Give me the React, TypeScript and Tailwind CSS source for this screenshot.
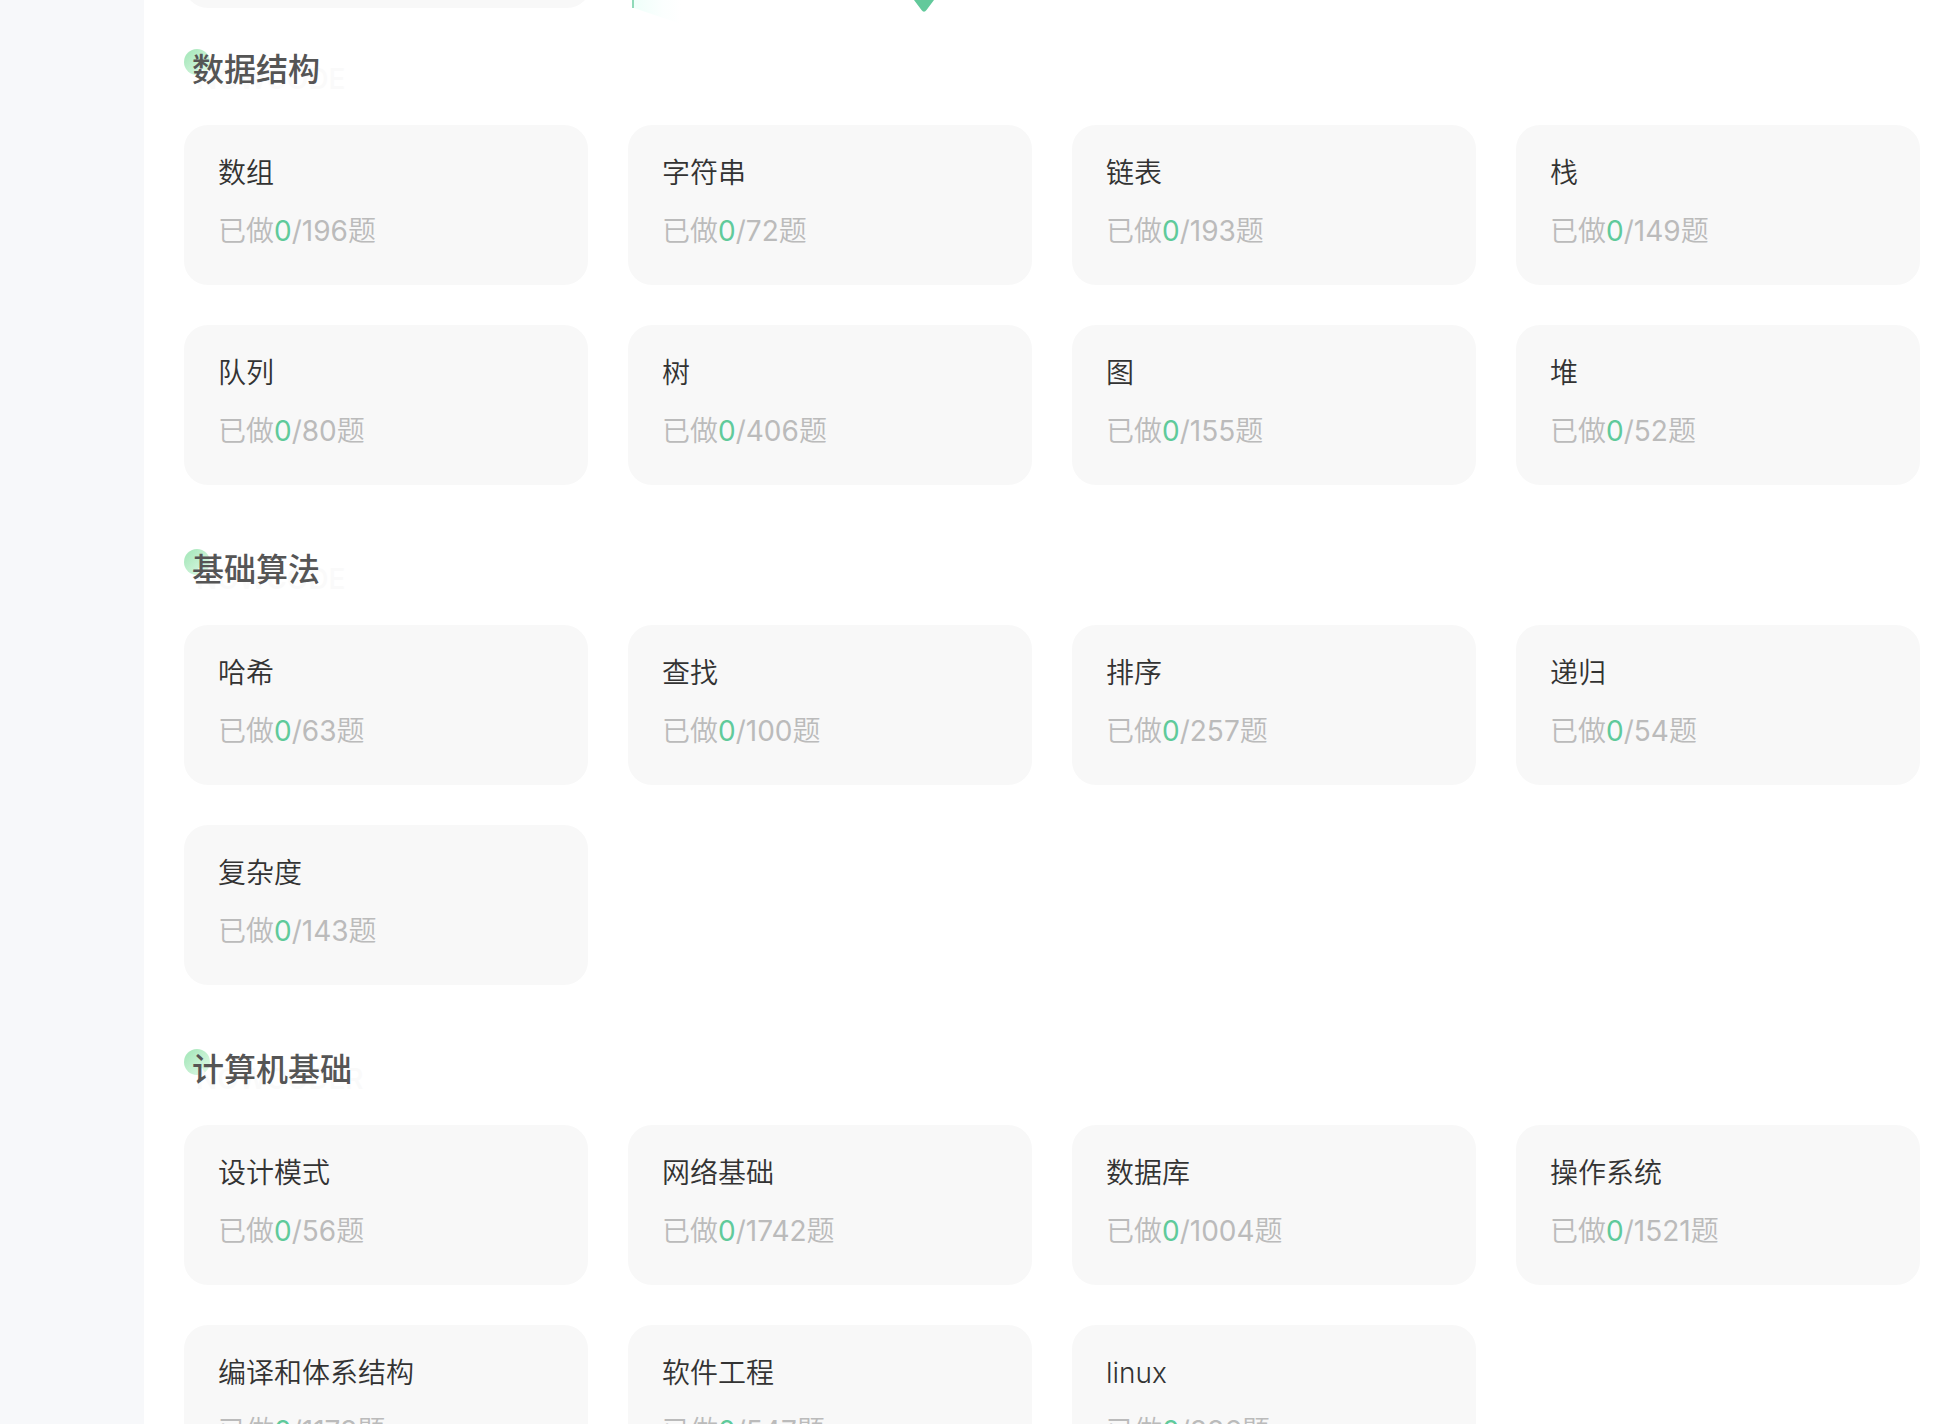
type Topic = { name: string; total: number };

const sections: { title: string; mark: string; topics: Topic[] }[] = [
  {
    title: '数据结构',
    mark: 'NOWCODE',
    topics: [
      { name: '数组', total: 196 },
      { name: '字符串', total: 72 },
      { name: '链表', total: 193 },
      { name: '栈', total: 149 },
      { name: '队列', total: 80 },
      { name: '树', total: 406 },
      { name: '图', total: 155 },
      { name: '堆', total: 52 },
    ],
  },
  {
    title: '基础算法',
    mark: 'NOWCODE',
    topics: [
      { name: '哈希', total: 63 },
      { name: '查找', total: 100 },
      { name: '排序', total: 257 },
      { name: '递归', total: 54 },
      { name: '复杂度', total: 143 },
    ],
  },
  {
    title: '计算机基础',
    mark: 'NOWCODER',
    topics: [
      { name: '设计模式', total: 56 },
      { name: '网络基础', total: 1742 },
      { name: '数据库', total: 1004 },
      { name: '操作系统', total: 1521 },
      { name: '编译和体系结构', total: 1178 },
      { name: '软件工程', total: 547 },
      { name: 'linux', total: 886 },
    ],
  },
];

function SectionTitle({ title, mark }: { title: string; mark: string }) {
  return (
    <h2 className="relative isolate w-fit pl-2 pr-6 text-[32px] leading-[42px] font-medium text-[#555555]">
      <span className="absolute top-0 left-0 -z-10 size-[26px] rounded-full bg-linear-to-br from-[#9fe5b5] to-[#e2faea]" />
      <span aria-hidden="true" className="absolute top-4 left-3 -z-10 text-[28px] leading-7 font-medium text-[#fafafa]">
        {mark}
      </span>
      {title}
    </h2>
  );
}

function TopicCard({ name, total }: Topic) {
  return (
    <a href="#" className="block h-40 rounded-3xl bg-[#f8f8f8] px-[34px] pt-7 text-[28px] font-[350]">
      <h3 className="leading-10 text-[#333333]">{name}</h3>
      <p className="mt-[18px] leading-10 text-[#bbbbbb]">
        已做<span className="font-normal text-[#5fca9b]">0</span>
        <span className="font-normal">/{total}</span>题
      </p>
    </a>
  );
}

export default function App() {
  return (
    <div className="flex min-h-screen bg-[#f7f8fa] pl-36 font-['Inter','Noto_Sans_CJK_SC',sans-serif]">
      <main className="min-w-0 flex-1 bg-white pr-6 pb-10 pl-10">
        <div className="flex h-[49px] gap-10">
          <div className="flex h-2 w-[407px] items-end overflow-hidden">
            <div className="h-20 w-full shrink-0 rounded-3xl bg-[#f8f8f8]" />
          </div>
          <svg className="h-6 w-80" viewBox="0 0 320 24" aria-hidden="true">
            <defs>
              <linearGradient id="glow" x1="0" x2="1" y1="0" y2="0">
                <stop offset="0" stopColor="#effffa" />
                <stop offset="0.6" stopColor="#fbfffe" />
                <stop offset="1" stopColor="#ffffff" />
              </linearGradient>
            </defs>
            <path d="M3 0H50V24L3 8Z" fill="url(#glow)" />
            <path d="M1 0h2v8H1z" fill="#8fdab9" />
            <path d="M283 0h20l-7.500 10q-2.500 3.500-5 0z" fill="#62c99b" />
          </svg>
        </div>
        <div className="flex flex-col gap-16">
          {sections.map((section) => (
            <section key={section.title} className="flex flex-col gap-[34px]">
              <SectionTitle title={section.title} mark={section.mark} />
              <div className="grid grid-cols-4 gap-10">
                {section.topics.map((topic) => (
                  <TopicCard key={topic.name} {...topic} />
                ))}
              </div>
            </section>
          ))}
        </div>
      </main>
    </div>
  );
}
